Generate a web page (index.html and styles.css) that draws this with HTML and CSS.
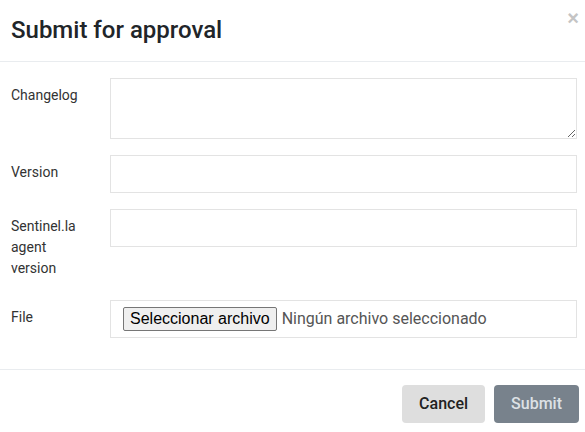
FILE: index.html
```html
<!DOCTYPE html>
<html lang="en">
<head>
  <meta charset="UTF-8" />
  <title>Submit for approval</title>
  <link rel="stylesheet" href="styles.css">
</head>
<body>
  <div class="modal">
    <div class="modal-header">
      <h5 class="modal-title">Submit for approval</h5>
      <button class="close" type="button">&times;</button>
    </div>

    <form class="modal-body">
      <div class="form-row">
        <label class="col-label" for="changelog">Changelog</label>
        <textarea id="changelog" class="form-control textarea"></textarea>
      </div>
      <div class="form-row">
        <label class="col-label" for="version">Version</label>
        <input id="version" class="form-control" type="text" />
      </div>
      <div class="form-row">
        <label class="col-label" for="agent">Sentinel.la agent version</label>
        <input id="agent" class="form-control" type="text" />
      </div>
      <div class="form-row">
        <label class="col-label">File</label>
        <div class="form-control file-box">
          <span class="file-btn">Seleccionar archivo</span>
          <span class="file-name">Ningún archivo seleccionado</span>
        </div>
      </div>
    </form>

    <div class="modal-footer">
      <button class="btn btn-light" type="button">Cancel</button>
      <button class="btn btn-secondary" type="button" disabled>Submit</button>
    </div>
  </div>
</body>
</html>
```

FILE: styles.css
```css
* {
  box-sizing: border-box;
}

body {
  margin: 0;
  background: #fff;
  font-family: Roboto, 'Liberation Sans', Arial, sans-serif;
  color: #333;
}

.modal {
  width: 585px;
  background: #fff;
}

.modal-header {
  display: flex;
  justify-content: space-between;
  align-items: flex-start;
  padding: 16px 6px 16px 11px;
  border-bottom: 1px solid #e9ecef;
}

.modal-title {
  margin: 0;
  font-size: 24px;
  line-height: 1.2;
  font-weight: 500;
  color: #212529;
}

.close {
  background: none;
  border: none;
  padding: 0;
  margin-top: -8px;
  font-family: 'Liberation Sans', Arial, sans-serif;
  font-size: 20px;
  font-weight: 700;
  line-height: 1;
  color: #c4c4c4;
  cursor: pointer;
}

.modal-body {
  padding: 16px 8px 15px 11px;
}

.form-row {
  display: grid;
  grid-template-columns: 74px 1fr;
  column-gap: 25px;
  margin-bottom: 16px;
}

.col-label {
  padding: 7px 0 5px;
  font-size: 14px;
  line-height: 21px;
  color: #333;
}

.form-control {
  display: block;
  width: 100%;
  height: 38px;
  padding: 6px 12px;
  font-family: Roboto, sans-serif;
  font-size: 14px;
  color: #495057;
  background: #fff;
  border: 1px solid #e3e3e3;
  border-radius: 0;
  outline: none;
}

.textarea {
  height: 61px;
  resize: vertical;
}

.file-box {
  display: flex;
  align-items: center;
  gap: 5px;
  height: 38px;
  padding: 0 12px;
}

.file-btn {
  font-family: 'Liberation Sans', Arial, sans-serif;
  font-size: 16px;
  line-height: 18px;
  color: #000;
  background: #efefef;
  border: 1px solid #767676;
  border-radius: 2px;
  padding: 2px 6px;
}

.file-name {
  font-size: 16px;
  color: #555;
}

.modal-footer {
  display: flex;
  justify-content: flex-end;
  gap: 9px;
  padding: 15px 6px 12px;
  border-top: 1px solid #e9ecef;
}

.btn {
  height: 38px;
  padding: 6px 16px;
  font-family: Roboto, sans-serif;
  font-size: 16px;
  font-weight: 500;
  border: 1px solid transparent;
  border-radius: 4px;
}

.btn-light {
  background: #dedede;
  color: #222;
  min-width: 82px;
}

.btn-secondary {
  background: #78828c;
  color: #dde1e5;
  min-width: 83px;
}
```
